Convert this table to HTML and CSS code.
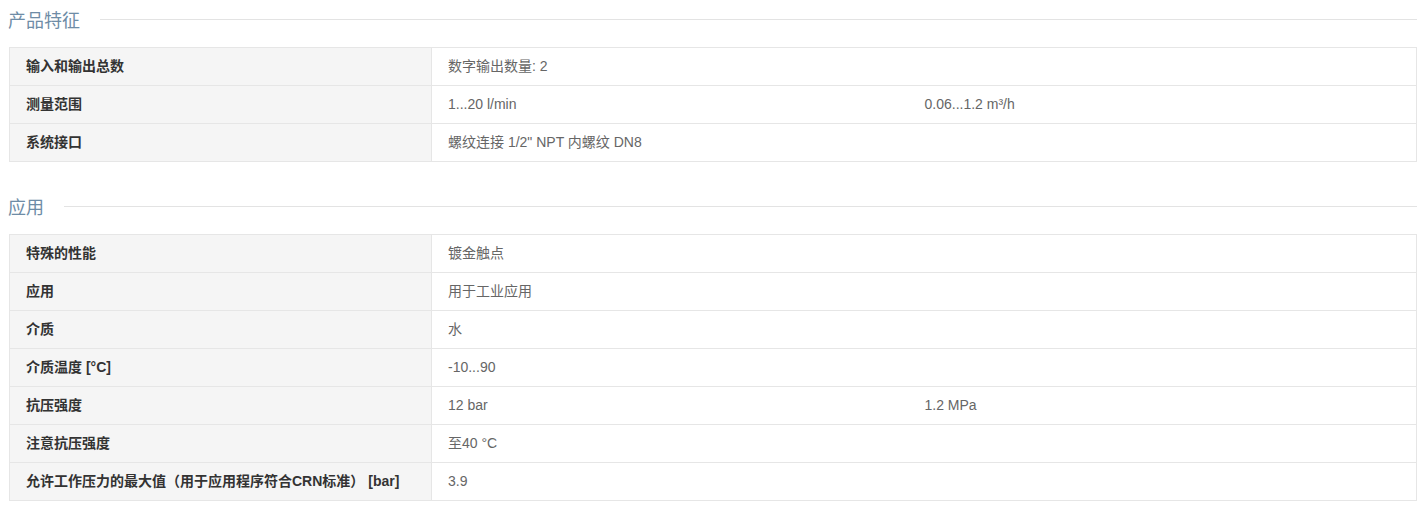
FILE: index.html
```html
<!DOCTYPE html>
<html lang="zh-CN">
<head>
<meta charset="utf-8">
<title>产品特征</title>
<link rel="stylesheet" href="styles.css">
</head>
<body>
<div class="page">
  <section class="section">
    <h2 class="section-title"><span>产品特征</span></h2>
    <table class="spec">
      <colgroup><col class="c-label"><col class="c-v1"><col class="c-v2"></colgroup>
      <tr><th>输入和输出总数</th><td colspan="2">数字输出数量: 2</td></tr>
      <tr><th>测量范围</th><td>1...20 l/min</td><td>0.06...1.2 m³/h</td></tr>
      <tr><th>系统接口</th><td colspan="2">螺纹连接 1/2" NPT 内螺纹 DN8</td></tr>
    </table>
  </section>
  <section class="section second">
    <h2 class="section-title"><span>应用</span></h2>
    <table class="spec">
      <colgroup><col class="c-label"><col class="c-v1"><col class="c-v2"></colgroup>
      <tr><th>特殊的性能</th><td colspan="2">镀金触点</td></tr>
      <tr><th>应用</th><td colspan="2">用于工业应用</td></tr>
      <tr><th>介质</th><td colspan="2">水</td></tr>
      <tr><th>介质温度 [°C]</th><td colspan="2">-10...90</td></tr>
      <tr><th>抗压强度</th><td>12 bar</td><td>1.2 MPa</td></tr>
      <tr><th>注意抗压强度</th><td colspan="2">至40 °C</td></tr>
      <tr><th>允许工作压力的最大值（用于应用程序符合CRN标准） [bar]</th><td colspan="2">3.9</td></tr>
    </table>
  </section>
</div>
</body>
</html>
```
FILE: styles.css
```css
html, body {
  margin: 0;
  padding: 0;
  background: #ffffff;
}
body {
  font-family: "Liberation Sans", Arial, "Noto Sans CJK SC", sans-serif;
  font-size: 14px;
  color: #666;
}
.page {
  width: 1408px;
  padding-left: 9px;
}
.section.second {
  margin-top: 25px;
}
.section-title {
  display: flex;
  align-items: center;
  gap: 20px;
  height: 38px;
  margin: 0 0 9px -1px;
  font-family: "Noto Sans CJK SC", sans-serif;
  font-weight: normal;
  font-size: 18px;
  color: #6e8ca6;
}
.section-title::after {
  content: "";
  flex: 1;
  height: 1px;
  background: #e3e3e3;
}
.spec {
  width: 1408px;
  border-collapse: collapse;
  table-layout: fixed;
  border: 1px solid #e6e6e6;
}
.c-label { width: 422px; }
.c-v1 { width: 477px; }
.spec th, .spec td {
  padding: 9px 16px;
  line-height: 19px;
  height: 19px;
  text-align: left;
  vertical-align: middle;
  border-top: 1px solid #e6e6e6;
  border-bottom: 1px solid #e6e6e6;
}
.spec th {
  background: #f5f5f5;
  font-weight: bold;
  color: #333;
  border-right: 1px solid #e6e6e6;
  white-space: nowrap;
}
.spec td {
  font-weight: normal;
}
```
